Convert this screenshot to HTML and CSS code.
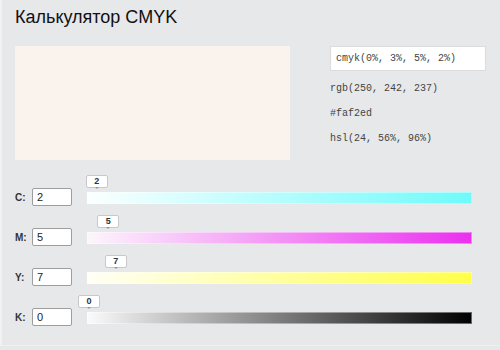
FILE: index.html
```html
<!DOCTYPE html>
<html lang="ru">
<head>
    <meta charset="UTF-8">
    <meta name="viewport" content="width=device-width, initial-scale=1.0">
    <title>Калькулятор CMYK</title>
    <link rel="stylesheet" href="styles.css">
</head>
<body>
    <main class="app">
        <h1>Калькулятор CMYK</h1>

        <section class="result">
            <div class="preview"></div>
            <div class="values">
                <div class="value-main">cmyk(0%, 3%, 5%, 2%)</div>
                <p>rgb(250, 242, 237)</p>
                <p>#faf2ed</p>
                <p>hsl(24, 56%, 96%)</p>
            </div>
        </section>

        <section class="channels">
            <div class="channel">
                <label for="c">C:</label>
                <input id="c" class="num" type="text" value="2">
                <div class="track track-c">
                    <span class="tip" style="left: 2%">2</span>
                </div>
            </div>
            <div class="channel">
                <label for="m">M:</label>
                <input id="m" class="num" type="text" value="5">
                <div class="track track-m">
                    <span class="tip" style="left: 5%">5</span>
                </div>
            </div>
            <div class="channel">
                <label for="y">Y:</label>
                <input id="y" class="num" type="text" value="7">
                <div class="track track-y">
                    <span class="tip" style="left: 7%">7</span>
                </div>
            </div>
            <div class="channel">
                <label for="k">K:</label>
                <input id="k" class="num" type="text" value="0">
                <div class="track track-k">
                    <span class="tip" style="left: 0%">0</span>
                </div>
            </div>
        </section>
    </main>
</body>
</html>
```

FILE: styles.css
```css
html, body {
    margin: 0;
    padding: 0;
    background-color: #e7e8ea;
}
body {
    font-family: "Liberation Sans", Arial, sans-serif;
    color: #111;
}
.app {
    height: 346px;
    box-sizing: border-box;
    border-left: 2px solid #f1f1f2;
    border-bottom: 1px solid #eeeff0;
    padding: 5px 13px 0 13px;
}
h1 {
    margin: 0;
    font-size: 18px;
    font-weight: normal;
    line-height: 24px;
    color: #111;
}
.result {
    display: flex;
    gap: 40px;
    margin-top: 17px;
}
.preview {
    width: 275px;
    height: 114px;
    background-color: #faf2ed;
}
.values {
    width: 156px;
    font-family: "Liberation Mono", "Courier New", monospace;
    font-size: 10px;
    color: #444;
}
.value-main {
    box-sizing: border-box;
    height: 25px;
    line-height: 24px;
    padding: 0 5px;
    background-color: #fff;
    border: 1px solid #dcdcdc;
    margin-bottom: 5px;
}
.values p {
    margin: 0;
    line-height: 25px;
}
.channels {
    margin-top: 17px;
}
.channel {
    display: flex;
    align-items: center;
    height: 40px;
}
.channel label {
    width: 17px;
    font-size: 10px;
    font-weight: bold;
    color: #333;
}
.num {
    box-sizing: border-box;
    width: 40px;
    height: 18px;
    margin: 0 15px 0 0;
    padding: 0 4px;
    border: 1px solid #9d9d9d;
    border-radius: 2px;
    background-color: #fff;
    font-family: "Liberation Sans", Arial, sans-serif;
    font-size: 11px;
    color: #222;
}
.track {
    position: relative;
    width: 385px;
    height: 12px;
    margin-top: 2px;
    box-sizing: border-box;
    border: 1px solid rgba(255, 255, 255, 0.4);
    background-origin: border-box;
}
.track-c {
    background-image: linear-gradient(to right, #fbffff, #6ffafb);
}
.track-m {
    background-image: linear-gradient(to right, #fcf6fc, #ea30ef);
}
.track-y {
    background-image: linear-gradient(to right, #fffff6, #ffff48);
}
.track-k {
    background-image: linear-gradient(to right, #fbfbfb, #000);
}
.tip {
    position: absolute;
    bottom: 15px;
    margin-left: 1px;
    transform: translateX(-50%);
    min-width: 22px;
    height: 13px;
    box-sizing: border-box;
    line-height: 11px;
    text-align: center;
    font-size: 9px;
    font-weight: bold;
    color: #333;
    background-color: #fff;
    border: 1px solid #c8c8c8;
    border-radius: 2px;
}
.tip::after {
    content: "";
    position: absolute;
    left: 50%;
    top: 100%;
    margin-left: -2px;
    border-left: 2px solid transparent;
    border-right: 2px solid transparent;
    border-top: 2px solid #999;
}
```
